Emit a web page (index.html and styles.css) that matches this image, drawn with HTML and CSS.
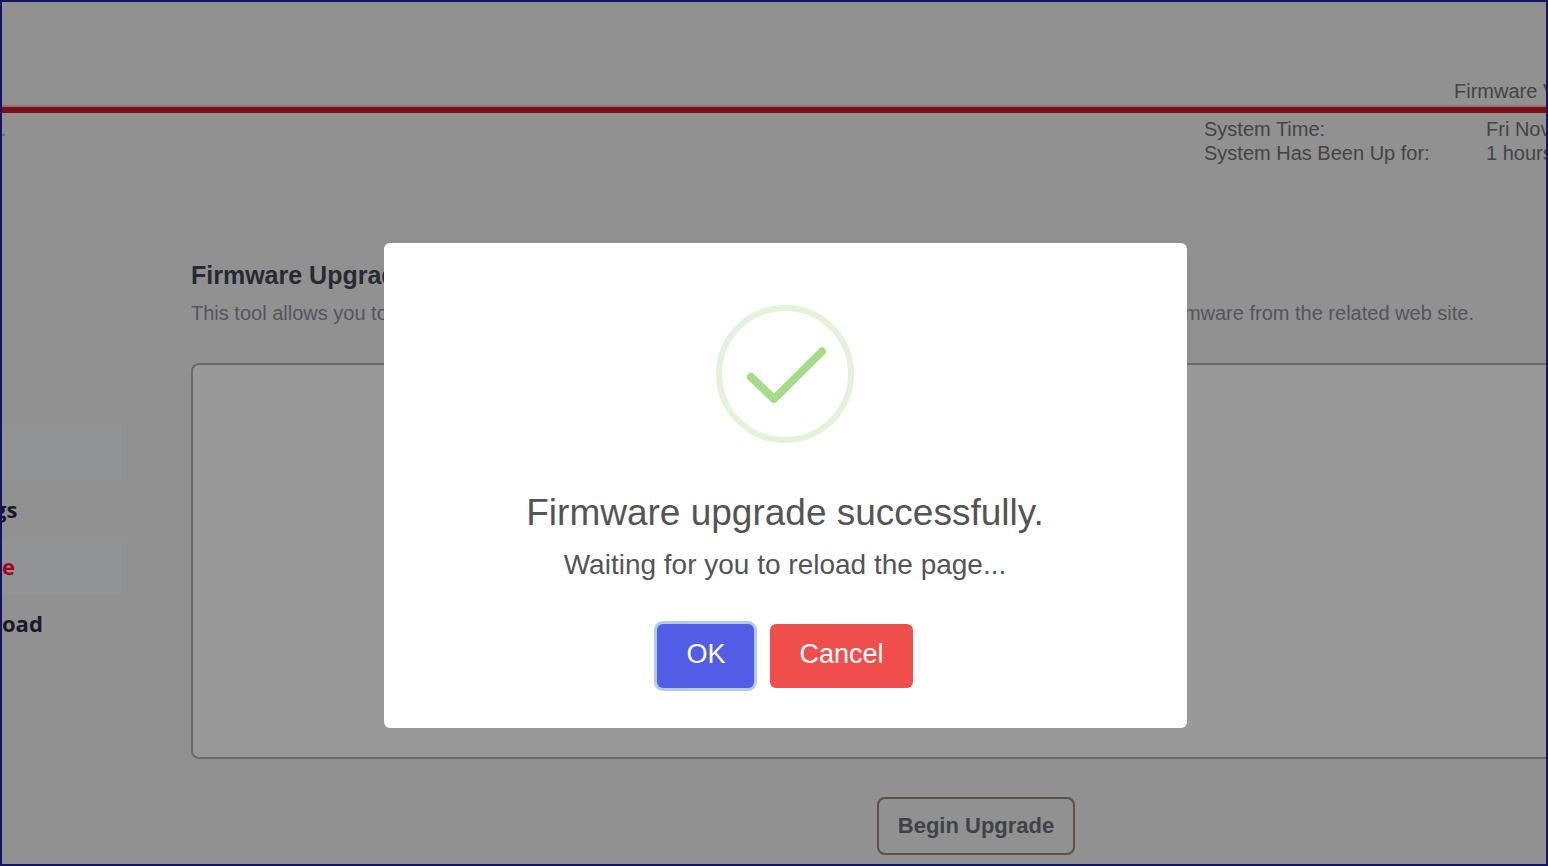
FILE: index.html
```html
<!DOCTYPE html>
<html lang="en">
<head>
<meta charset="utf-8">
<title>Firmware Upgrade</title>
<link rel="stylesheet" href="styles.css">
</head>
<body>
<div class="frame">
  <header class="header"><span class="version">Firmware V</span></header>
  <section class="status">
    <span class="status-mark"></span>
    <dl class="status-list">
      <dt>System Time:</dt><dd>Fri Nov</dd>
      <dt>System Has Been Up for:</dt><dd>1 hours</dd>
    </dl>
  </section>
  <div class="body">
    <nav class="sidebar">
      <a class="nav-item shaded" href="#"></a>
      <a class="nav-item tucked" href="#">gs</a>
      <a class="nav-item shaded active" href="#">e</a>
      <a class="nav-item" href="#">oad</a>
    </nav>
    <main class="content">
      <h1 class="title" id="page-title">Firmware Upgrade</h1>
      <p class="intro"><span>This tool allows you to</span><span>firmware from the related web site.</span></p>
      <textarea class="log" aria-labelledby="page-title" readonly></textarea>
      <button class="begin" type="button">Begin Upgrade</button>
    </main>
  </div>
  <div class="overlay">
    <div class="modal" role="dialog" aria-labelledby="modal-title">
      <svg class="check" viewBox="0 0 138 138" fill="none" aria-hidden="true">
        <circle cx="69" cy="69" r="66" stroke="#e2f3da" stroke-width="6"/>
        <path d="M35 72 58 94 106 46.500" stroke="#a5dc86" stroke-width="8" stroke-linecap="round" stroke-linejoin="round"/>
      </svg>
      <h2 class="modal-title" id="modal-title">Firmware upgrade successfully.</h2>
      <p class="modal-text">Waiting for you to reload the page...</p>
      <div class="actions">
        <button class="btn ok" type="button">OK</button>
        <button class="btn cancel" type="button">Cancel</button>
      </div>
    </div>
  </div>
</div>
</body>
</html>
```
FILE: styles.css
```css
* { box-sizing: border-box; }

body {
  margin: 0;
  font-family: "Liberation Sans", Arial, sans-serif;
  font-size: 20px;
  line-height: 24px;
  color: #444446;
  background: #919191;
}

.frame {
  position: relative;
  display: flex;
  flex-direction: column;
  height: 100vh;
  overflow: hidden;
  border: 2px solid #14145f;
}

.header {
  display: flex;
  flex-shrink: 0;
  justify-content: flex-end;
  align-items: flex-end;
  height: 111px;
  padding-bottom: 4px;
  border-bottom: 6px solid #7f0e14;
  box-shadow: inset 0 -2px #8f7273;
}

.version {
  width: 92px;
  white-space: nowrap;
}

.status {
  display: flex;
  flex-shrink: 0;
  justify-content: space-between;
  height: 82px;
  padding-top: 4px;
}

.status-mark {
  width: 3px;
  height: 2px;
  margin-top: 17px;
  background: #667482;
}

.status-list {
  display: grid;
  grid-template-columns: 282px 60px;
  align-content: start;
  margin: 0;
  white-space: nowrap;
}

.status-list dd { margin: 0; }

.body {
  display: flex;
  flex: 1;
}

.sidebar {
  display: flex;
  flex-direction: column;
  gap: 2px;
  flex-shrink: 0;
  width: 121px;
  padding-top: 230px;
  border-right: 1px solid #8f8f8f;
  font-family: "Open Sans", sans-serif;
  font-size: 22px;
  font-weight: 700;
}

.nav-item {
  display: flex;
  align-items: center;
  height: 55px;
  padding-bottom: 2px;
  color: #151b26;
  text-decoration: none;
}

.shaded { background: #919395; }
.active { color: #a0052c; }
.tucked { text-indent: -8px; }

.content {
  display: flex;
  flex: 1;
  flex-direction: column;
  margin-left: 35px;
  margin-right: -215px;
  padding: 64px 0 0 32px;
  border-left: 1px solid #8f8f8f;
}

.title {
  margin: 0 0 10px;
  font-size: 25px;
  line-height: 32px;
  color: #262b33;
}

.intro {
  display: flex;
  justify-content: space-between;
  margin: 0 287px 38px 0;
  color: #54545e;
}

.log {
  width: 100%;
  height: 396px;
  border: 2px solid #6a6a6a;
  border-radius: 8px;
  outline: 0;
  resize: none;
  background: #999;
}

.begin {
  align-self: center;
  margin-top: 38px;
  padding: 14px 19px;
  border: 2px solid #5f5142;
  border-radius: 8px;
  background: transparent;
  color: #3f4247;
  font: 700 22px/26px "Liberation Sans", Arial, sans-serif;
}

.overlay {
  position: absolute;
  inset: 0;
  display: flex;
  justify-content: center;
  align-items: flex-start;
  padding: 241px 0 0 22px;
}

.modal {
  display: flex;
  flex-direction: column;
  align-items: center;
  width: 803px;
  max-width: 100%;
  padding: 62px 40px 40px;
  border-radius: 6px;
  background: #fff;
  color: #545454;
  text-align: center;
}

.check {
  width: 138px;
  height: 138px;
}

.modal-title {
  margin: 48px 0 12px;
  font-size: 37px;
  line-height: 44px;
  font-weight: 400;
}

.modal-text {
  margin: 0;
  font-size: 28px;
  line-height: 36px;
}

.actions {
  display: flex;
  gap: 16px;
  margin-top: 41px;
}

.btn {
  padding: 14px 29px 18px;
  border: 0;
  border-radius: 6px;
  color: #fff;
  font: 400 27px/32px "Liberation Sans", Arial, sans-serif;
}

.ok {
  background: #525ce5;
  box-shadow: 0 0 0 3px #b2cbe3;
}

.cancel { background: #f14e4e; }
```
